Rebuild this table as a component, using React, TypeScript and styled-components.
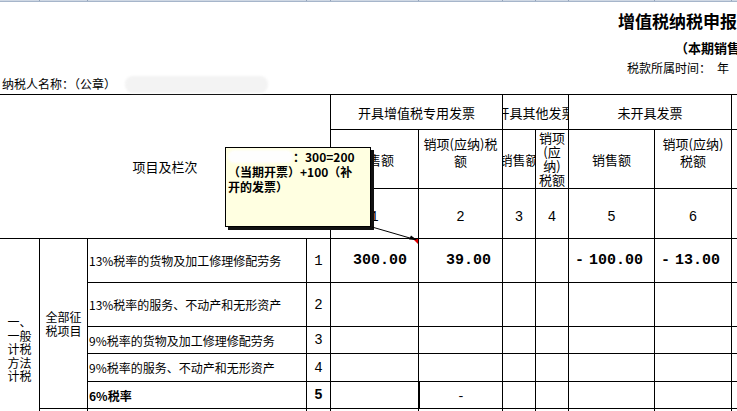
import React from "react";
import styled, { createGlobalStyle } from "styled-components";

const COLS = [40, 48, 219, 24, 88, 84, 33, 33, 86, 77, 60];
const ROWS = [35, 59, 50, 44, 44, 27, 28, 27, 27, 27];

const Global = createGlobalStyle`
  html, body { margin: 0; padding: 0; background: #fff; overflow: hidden; }
  body { font-family: "Noto Sans CJK SC", "Noto Sans", sans-serif; color: #000; }
`;

const Page = styled.div`
  position: relative;
  width: 737px;
  height: 411px;
  overflow: hidden;
  background: #fff;
`;

const ColumnBar = styled.div`
  display: flex;
  width: max-content;
  height: 1px;
  background: #cfd8e4;
  border-bottom: 1px solid #a6b5ca;
`;

const ColumnHead = styled.div<{ $w: number }>`
  flex: 0 0 ${(p) => p.$w}px;
  box-sizing: border-box;
  height: 1px;
  border-right: 1px solid #93a3ba;
`;

const TitleLine = styled.div`
  margin-top: 9px;
  padding-left: 618px;
  height: 20px;
  line-height: 20px;
  font-size: 17px;
  font-weight: 700;
  white-space: nowrap;
`;

const SubLine = styled.div`
  margin-top: 9px;
  padding-left: 675px;
  height: 16px;
  line-height: 16px;
  font-size: 13px;
  font-weight: 700;
  white-space: nowrap;
`;

const PeriodLine = styled.div`
  margin-top: 4px;
  padding-left: 627px;
  height: 16px;
  line-height: 16px;
  font-size: 12px;
  white-space: nowrap;
`;

const NameLine = styled.div`
  padding-left: 2px;
  height: 16px;
  line-height: 16px;
  font-size: 12px;
  white-space: nowrap;
  display: flex;
  align-items: center;
`;

const NameBlur = styled.span`
  display: inline-block;
  width: 143px;
  height: 17px;
  margin-left: 9px;
  border-radius: 8px;
  background: #f3f3f3;
  filter: blur(1px);
`;

const Sheet = styled.div`
  margin-top: 2px;
  display: grid;
  width: max-content;
  grid-template-columns: ${COLS.map((c) => `${c}px`).join(" ")};
  grid-template-rows: ${ROWS.map((r) => `${r}px`).join(" ")};
  border-top: 1px solid #000;
`;

type Pos = { $c: number; $r: number; $cs?: number; $rs?: number };

const Cell = styled.div<Pos>`
  grid-column: ${(p) => `${p.$c} / span ${p.$cs ?? 1}`};
  grid-row: ${(p) => `${p.$r} / span ${p.$rs ?? 1}`};
  position: relative;
  box-sizing: border-box;
  border-right: 1px solid #000;
  border-bottom: 1px solid #000;
  overflow: hidden;
  display: flex;
  align-items: center;
  justify-content: center;
  white-space: nowrap;
`;

const HeadCell = styled(Cell)`
  font-size: 13px;
  line-height: 17px;
`;

const StackCell = styled(Cell)<{ $top: number; $lh: number; $size?: number }>`
  display: block;
  text-align: center;
  padding-top: ${(p) => p.$top}px;
  font-size: ${(p) => p.$size ?? 13}px;
  line-height: ${(p) => p.$lh}px;
`;

const IndexCell = styled(Cell)<{ $top?: number; $bold?: boolean }>`
  padding-top: ${(p) => p.$top ?? 0}px;
  font-family: "Liberation Mono", monospace;
  font-size: 14px;
  font-weight: ${(p) => (p.$bold ? 700 : 400)};
`;

const DescCell = styled(Cell)<{ $bold?: boolean }>`
  justify-content: flex-start;
  padding-left: 1px;
  font-size: 12px;
  font-weight: ${(p) => (p.$bold ? 700 : 400)};
`;

const ValueCell = styled(Cell)<{ $note?: boolean; $edge?: boolean }>`
  justify-content: flex-end;
  padding-right: 11px;
  font-family: "Liberation Mono", monospace;
  font-size: 15px;
  font-weight: 700;
  border-left: ${(p) => (p.$edge ? "1px solid #000" : "none")};
  &::after {
    content: "";
    display: ${(p) => (p.$note ? "block" : "none")};
    position: absolute;
    top: 0;
    right: 0;
    border-top: 5px solid #e00000;
    border-left: 5px solid transparent;
  }
`;

const DashCell = styled(Cell)<{ $edge?: boolean }>`
  font-family: "Liberation Mono", monospace;
  font-size: 13px;
  padding-top: 2px;
  border-left: ${(p) => (p.$edge ? "1px solid #000" : "none")};
`;

const Minus = styled.span`
  margin-right: 5px;
`;

const Comment = styled.div`
  position: absolute;
  left: 225px;
  top: 147px;
  width: 146px;
  height: 80px;
  box-sizing: border-box;
  padding: 1px 2px;
  background: #ffffe1;
  border: 1px solid #000;
  box-shadow: 3px 3px 0 #111;
  font-size: 12px;
  font-weight: 700;
  line-height: 15px;
`;

const CommentLine = styled.div`
  white-space: nowrap;
  display: flex;
  align-items: center;
`;

const CommentBlur = styled.span`
  display: inline-block;
  width: 65px;
  height: 13px;
  border-radius: 6px;
  background: #fefefe;
  filter: blur(0.8px);
`;

const Arrow = styled.svg`
  position: absolute;
  left: 365px;
  top: 222px;
  width: 60px;
  height: 25px;
  overflow: visible;
`;

const heads = ["1", "2", "3", "4", "5", "6"];

const rows = [
  { r: 4, text: "13%税率的货物及加工修理修配劳务", n: "1" },
  { r: 5, text: "13%税率的服务、不动产和无形资产", n: "2" },
  { r: 6, text: "9%税率的货物及加工修理修配劳务", n: "3" },
  { r: 7, text: "9%税率的服务、不动产和无形资产", n: "4" },
  { r: 8, text: "6%税率", n: "5", bold: true },
];

export default function App() {
  return (
    <Page>
      <Global />
      <ColumnBar>
        {COLS.map((w, i) => (
          <ColumnHead key={i} $w={w} />
        ))}
      </ColumnBar>
      <TitleLine>增值税纳税申报表</TitleLine>
      <SubLine>（本期销售情况明细）</SubLine>
      <PeriodLine>税款所属时间：&ensp;年</PeriodLine>
      <NameLine>
        纳税人名称：（公章）
        <NameBlur />
      </NameLine>

      <Sheet>
        <HeadCell $c={1} $r={1} $cs={4} $rs={3}>项目及栏次</HeadCell>
        <HeadCell $c={5} $r={1} $cs={2}>开具增值税专用发票</HeadCell>
        <HeadCell $c={7} $r={1} $cs={2}>开具其他发票</HeadCell>
        <HeadCell $c={9} $r={1} $cs={2}>未开具发票</HeadCell>
        <HeadCell $c={11} $r={1} />

        <HeadCell $c={5} $r={2}>销售额</HeadCell>
        <StackCell $c={6} $r={2} $top={5} $lh={17}>
          销项(应纳)税
          <br />额
        </StackCell>
        <HeadCell $c={7} $r={2}>销售额</HeadCell>
        <StackCell $c={8} $r={2} $top={1} $lh={14}>
          销项
          <br />(应
          <br />纳)
          <br />税额
        </StackCell>
        <HeadCell $c={9} $r={2}>销售额</HeadCell>
        <StackCell $c={10} $r={2} $top={5} $lh={17}>
          销项(应纳)
          <br />税额
        </StackCell>
        <HeadCell $c={11} $r={2} />

        {heads.map((h, i) => (
          <IndexCell key={h} $c={5 + i} $r={3} $top={6}>
            {h}
          </IndexCell>
        ))}
        <IndexCell $c={11} $r={3} />

        <StackCell $c={1} $r={4} $rs={7} $top={76} $lh={13.5} $size={12}>
          一、
          <br />一般
          <br />计税
          <br />方法
          <br />计税
        </StackCell>
        <StackCell $c={2} $r={4} $rs={5} $top={71} $lh={13.5} $size={12}>
          全部征
          <br />税项目
        </StackCell>

        {rows.map((row) => (
          <React.Fragment key={row.r}>
            <DescCell $c={3} $r={row.r} $bold={row.bold}>
              {row.text}
            </DescCell>
            <IndexCell $c={4} $r={row.r} $bold={row.bold}>
              {row.n}
            </IndexCell>
          </React.Fragment>
        ))}

        <ValueCell $c={5} $r={4} $note>300.00</ValueCell>
        <ValueCell $c={6} $r={4}>39.00</ValueCell>
        <ValueCell $c={7} $r={4} />
        <ValueCell $c={8} $r={4} />
        <ValueCell $c={9} $r={4}>
          <Minus>-</Minus>100.00
        </ValueCell>
        <ValueCell $c={10} $r={4}>
          <Minus>-</Minus>13.00
        </ValueCell>
        <ValueCell $c={11} $r={4} />

        {[5, 6, 7].map((r) =>
          [5, 6, 7, 8, 9, 10, 11].map((c) => <ValueCell key={`${r}-${c}`} $c={c} $r={r} />)
        )}

        <ValueCell $c={5} $r={8} />
        <DashCell $c={6} $r={8} $edge>
          -
        </DashCell>
        {[7, 8, 9, 10, 11].map((c) => (
          <ValueCell key={`8-${c}`} $c={c} $r={8} />
        ))}

        {[9, 10].map((r) =>
          [2, 3, 4, 5, 6, 7, 8, 9, 10, 11].map((c) => <ValueCell key={`${r}-${c}`} $c={c} $r={r} />)
        )}
      </Sheet>

      <Comment>
        <CommentLine>
          <CommentBlur />
          ：300=200
        </CommentLine>
        <CommentLine>（当期开票）+100（补</CommentLine>
        <CommentLine>开的发票）</CommentLine>
      </Comment>

      <Arrow viewBox="0 0 60 25">
        <line x1="7" y1="5" x2="50" y2="17.5" stroke="#000" strokeWidth="1" />
        <polygon points="52,18 44,17.5 46,13.5" fill="#000" />
      </Arrow>
    </Page>
  );
}
